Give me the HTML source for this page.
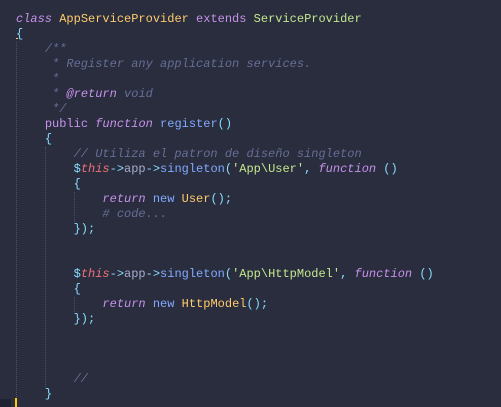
<!DOCTYPE html>
<html><head><style>
html,body{margin:0;padding:0;background:#292d3e;width:501px;height:407px;overflow:hidden}
pre{position:absolute;left:16px;top:12px;margin:0;font-family:"Liberation Mono",monospace;font-size:12px;line-height:15px;color:#a6accd;white-space:pre}
.k{color:#c792ea}.i{font-style:italic}.y{color:#ffcb6b}.g{color:#c3e88d}.c{color:#676e95;font-style:italic}
.b{color:#82aaff}.p{color:#89ddff}.r{color:#f07178}.a{color:#a6accd}
.guide{position:absolute;width:0;border-left:1px dotted #4b5068}
</style></head><body>
<div class="guide" style="left:16px;top:42px;height:355px"></div>
<div class="guide" style="left:45px;top:147px;height:240px"></div>
<div class="guide" style="left:74px;top:192px;height:30px"></div>
<div class="guide" style="left:74px;top:297px;height:15px"></div>
<pre><span class="k i">class</span> <span class="y">AppServiceProvider</span> <span class="k">extends</span> <span class="g">ServiceProvider</span>
<span class="p" style="text-decoration:underline;text-decoration-color:#ffcb6b">{</span>
    <span class="c">/**</span>
<span class="c">     * Register any application services.</span>
<span class="c">     *</span>
<span class="c">     * </span><span class="k i">@return</span><span class="c"> void</span>
<span class="c">     */</span>
    <span class="k">public</span> <span class="k i">function</span> <span class="b">register</span><span class="p">()</span>
    <span class="p">{</span>
        <span class="c">// Utiliza el patron de diseño singleton</span>
        <span class="p">$</span><span class="r i">this</span><span class="p">-&gt;</span>app<span class="p">-&gt;</span><span class="b">singleton</span><span class="p">(</span><span class="g">'App\User'</span><span class="p">,</span> <span class="k i">function</span> <span class="p">()</span>
        <span class="p">{</span>
            <span class="k i">return</span> <span class="b">new</span> <span class="y">User</span><span class="p">();</span>
            <span class="c"># code...</span>
        <span class="p">});</span>


        <span class="p">$</span><span class="r i">this</span><span class="p">-&gt;</span>app<span class="p">-&gt;</span><span class="b">singleton</span><span class="p">(</span><span class="g">'App\HttpModel'</span><span class="p">,</span> <span class="k i">function</span> <span class="p">()</span>
        <span class="p">{</span>
            <span class="k i">return</span> <span class="b">new</span> <span class="y">HttpModel</span><span class="p">();</span>
        <span class="p">});</span>



        <span class="c">//</span>
    <span class="p">}</span></pre>
<div style="position:absolute;left:0;top:399px;width:11px;height:8px;background:#1f2230"></div>
<div style="position:absolute;left:15px;top:398px;width:2px;height:9px;background:#ffcc00"></div>
</body></html>
